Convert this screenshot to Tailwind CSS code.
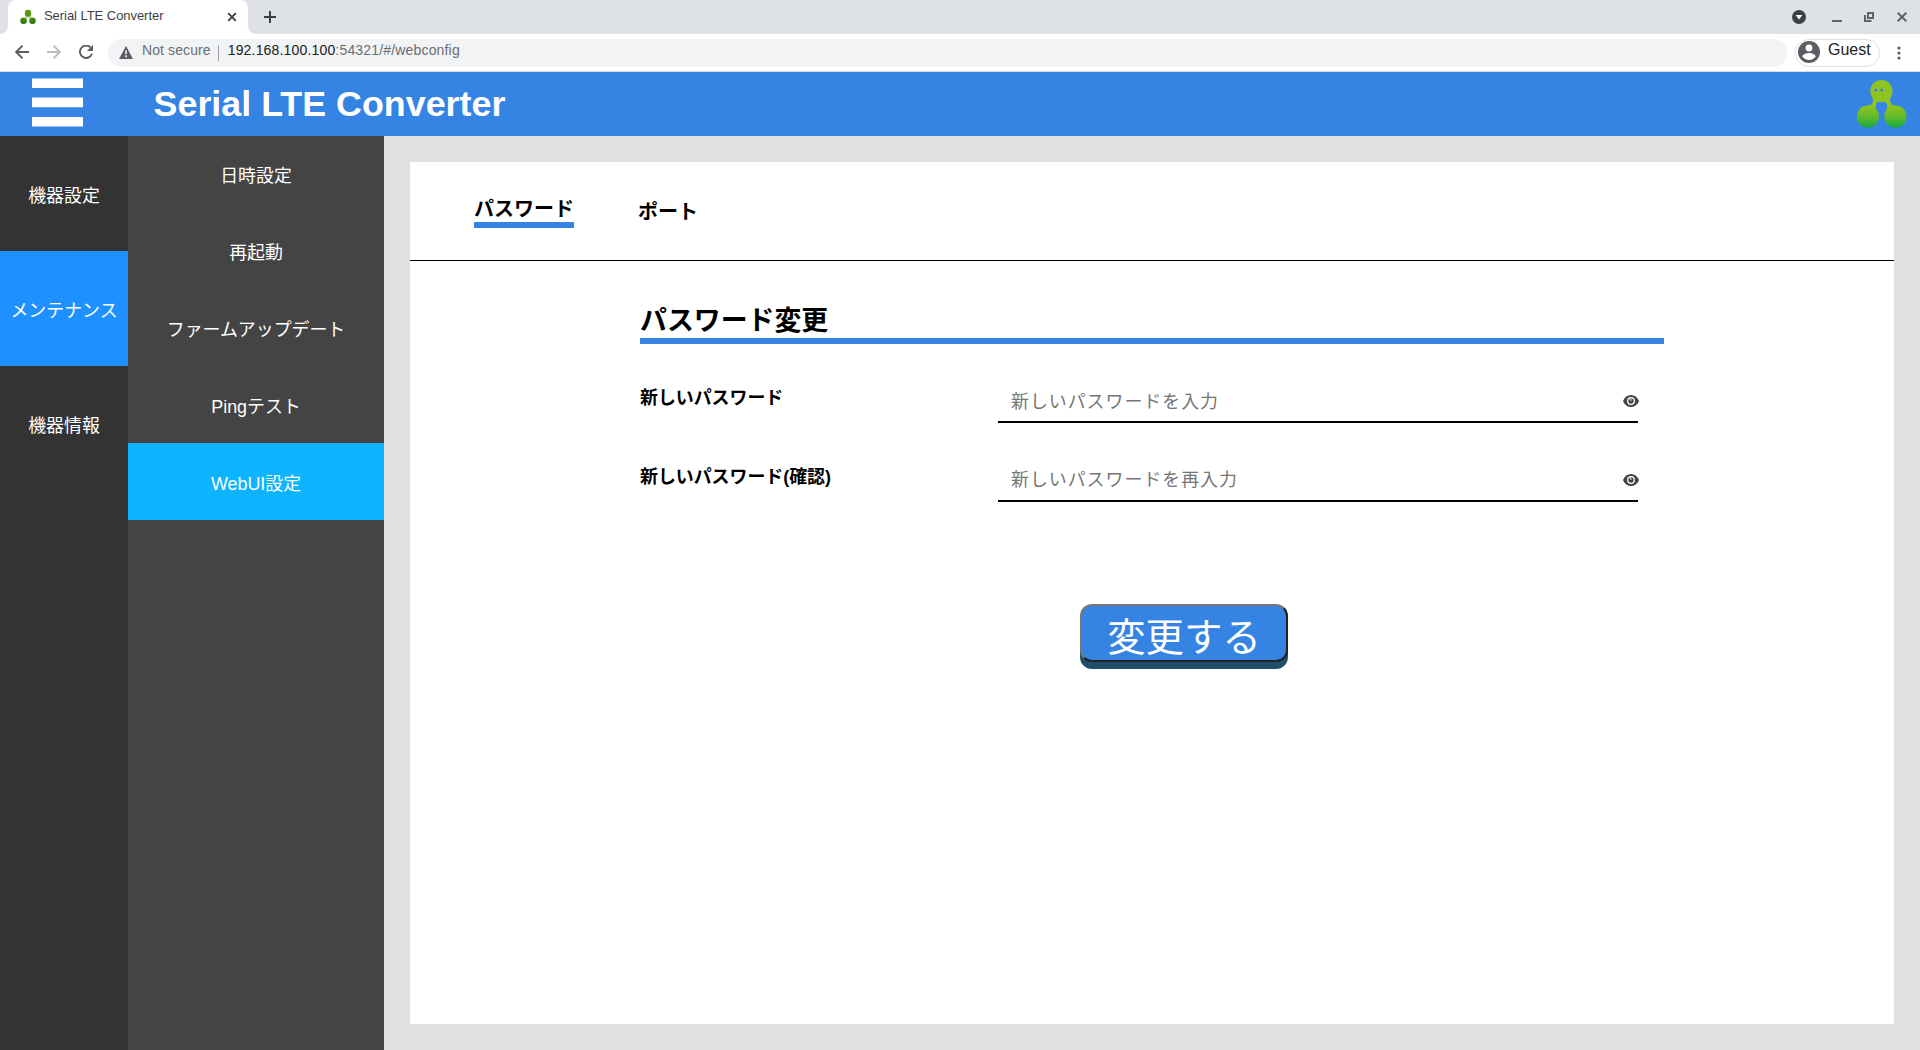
<!DOCTYPE html>
<html lang="ja">
<head>
<meta charset="utf-8">
<title>Serial LTE Converter</title>
<script src="https://cdn.jsdelivr.net/npm/@tailwindcss/browser@4"></script>
</head>
<body class="h-[1050px] w-[1920px] overflow-hidden flex flex-col bg-[#e0e0e0] font-['Liberation_Sans','Noto_Sans_CJK_JP',sans-serif] text-black">
<!-- Tab strip -->
<div class="h-[34px] shrink-0 bg-[#dee1e6] flex items-stretch">
  <div class="relative ml-2 w-[240px] bg-white rounded-t-lg flex items-center pl-3">
    <svg class="absolute -left-2 bottom-0 w-2 h-2" viewBox="0 0 8 8"><path d="M8 0v8H0a8 8 0 0 0 8-8z" fill="#fff"/></svg>
    <svg class="absolute -right-2 bottom-0 w-2 h-2" viewBox="0 0 8 8"><path d="M0 0v8h8a8 8 0 0 1-8-8z" fill="#fff"/></svg>
    <svg class="w-4 h-4 shrink-0" viewBox="0 0 16 16"><defs><linearGradient id="fav" x1="0" y1="0" x2="0" y2="16" gradientUnits="userSpaceOnUse"><stop offset="0" stop-color="#5f9e0c"/><stop offset=".65" stop-color="#438c0a"/><stop offset="1" stop-color="#1c6a0c"/></linearGradient></defs><path d="M5.500 5v4h1.300a1.800 1.800 0 0 1 2.800 0h1.300V5z" fill="#9cc46a"/><g fill="url(#fav)"><circle cx="8" cy="4" r="3.200"/><circle cx="3.600" cy="11.700" r="3.300"/><circle cx="12.500" cy="11.700" r="3.300"/></g></svg>
    <span class="ml-2 -mt-[2px] text-[13px] leading-4 tracking-[-0.05px] text-[#3c4043] whitespace-nowrap">Serial LTE Converter</span>
    <svg class="absolute left-[219px] top-[12px] w-[10px] h-[10px]" viewBox="0 0 10 10"><path d="M1.200 1.200l7.600 7.600M8.800 1.200L1.200 8.800" stroke="#3c4043" stroke-width="1.800"/></svg>
  </div>
  <svg class="ml-4 mt-[11px] w-3 h-3" viewBox="0 0 12 12"><path d="M6 0v12M0 6h12" stroke="#3c4043" stroke-width="2"/></svg>
  <div class="ml-auto flex items-start pr-[13px]">
    <svg class="mt-[10px] w-[14px] h-[14px]" viewBox="0 0 14 14"><circle cx="7" cy="7" r="7" fill="#3c4043"/><path d="M3.700 5h6.600L7 9.500z" fill="#fff"/></svg>
    <svg class="ml-[26px] mt-5 w-[10px] h-[2px]" viewBox="0 0 10 2"><path d="M0 1h10" stroke="#5f6368" stroke-width="2"/></svg>
    <svg class="ml-[22px] mt-3 w-[10px] h-[10px]" viewBox="0 0 10 10"><path d="M4 1h5v5H4zM1 3v6h6.500" fill="none" stroke="#5f6368" stroke-width="2"/></svg>
    <svg class="ml-[23px] mt-3 w-[10px] h-[10px]" viewBox="0 0 10 10"><path d="M.700.700l8.600 8.600M9.300.700L.700 9.300" stroke="#5f6368" stroke-width="2"/></svg>
  </div>
</div>
<!-- Toolbar -->
<div class="h-[38px] shrink-0 bg-white border-b border-[#d9dce0] flex items-center pl-[15px]">
  <svg class="-mt-px w-[14px] h-[14px]" viewBox="0 0 14 14"><path d="M14 7H1.500M7.500.700L1.200 7l6.300 6.300" fill="none" stroke="#5a5e63" stroke-width="1.900"/></svg>
  <svg class="-mt-px ml-[18px] w-[14px] h-[14px]" viewBox="0 0 14 14"><path d="M0 7h12.500M6.500.700L12.800 7l-6.300 6.300" fill="none" stroke="#bcbec1" stroke-width="1.900"/></svg>
  <svg class="-mt-px ml-[18px] w-[14px] h-[14px]" viewBox="0 0 14 14"><path d="M11.600 2.400A6.200 6.200 0 1 0 13 8.800" fill="none" stroke="#5a5e63" stroke-width="1.900"/><path d="M14 0v6H8z" fill="#5a5e63"/></svg>
  <div class="ml-[15px] w-[1679px] h-7 rounded-full bg-[#f1f3f4] flex items-center pl-[11px] text-sm leading-4">
    <svg class="-mt-px w-[14px] h-[13px]" viewBox="0 0 14 13"><path d="M7 0l7 13H0z" fill="#5a5e63"/><path d="M7 4.500v3.500M7 9.200v2" stroke="#fff" stroke-width="1.500"/></svg>
    <span class="ml-[9px] -mt-[6px] tracking-[0.1px] text-[#6a6e73] whitespace-nowrap">Not secure</span>
    <span class="ml-[7px] w-px h-4 bg-[#9aa0a6]"></span>
    <span class="ml-[9px] -mt-[6px] tracking-[0.17px] text-[#6a6e73] whitespace-nowrap"><span class="text-[#202124]">192.168.100.100</span>:54321/#/webconfig</span>
  </div>
  <div class="ml-2 w-[85px] h-7 rounded-full border border-[#dfe1e5] flex items-center pl-[2px]">
    <svg class="-mt-px w-[22px] h-[22px]" viewBox="0 0 22 22"><circle cx="11" cy="11" r="11" fill="#5a5e63"/><circle cx="11" cy="7" r="3.400" fill="#fff"/><path d="M4.300 15.500c0-2.300 4.400-3.500 6.700-3.500s6.700 1.200 6.700 3.500c-1.400 2-3.800 3.400-6.700 3.400s-5.300-1.400-6.700-3.400z" fill="#fff"/></svg>
    <span class="ml-2 -mt-[6px] text-base leading-4 text-[#202124]">Guest</span>
  </div>
  <svg class="ml-[17px] w-[4px] h-[14px]" viewBox="0 0 4 14"><g fill="#5a5e63"><circle cx="2" cy="2" r="1.600"/><circle cx="2" cy="7" r="1.600"/><circle cx="2" cy="12" r="1.600"/></g></svg>
</div>
<!-- App header -->
<header class="h-16 shrink-0 bg-[#3584e4] flex items-center">
  <svg class="ml-8 mb-[4px] w-[51px] h-[50px]" viewBox="0 0 51 50"><path d="M0 1.400h51v9.600H0zM0 20.600h51V30.200H0zM0 39.900h51v9.600H0z" fill="#fff"/></svg>
  <h1 class="ml-[70.600px] text-[35.84px] leading-[41px] font-bold text-white whitespace-nowrap">Serial LTE Converter</h1>
  <svg class="ml-auto mr-[13px] w-[50px] h-[48px]" viewBox="0 0 50 48"><defs><linearGradient id="lg" x1="0" y1="0" x2="0" y2="48" gradientUnits="userSpaceOnUse"><stop offset=".55" stop-color="#8fc31f"/><stop offset=".78" stop-color="#5fb82c"/><stop offset="1" stop-color="#12a93c"/></linearGradient></defs><g fill="url(#lg)"><circle cx="24.400" cy="11.200" r="11.100"/><circle cx="10.900" cy="36.700" r="11.100"/><circle cx="38.400" cy="36.700" r="11.100"/><path d="M14.500 16c3 4 1.500 9.600-3.600 9.600L20 31c-2.500-5-1.200-10.200 4.500-10.200S31.500 26 29 31l9.400-5.400c-5.100 0-6.900-5.600-3.900-9.600z"/></g><circle cx="18.700" cy="10.200" r="1.400" fill="#3584e4"/><circle cx="24.700" cy="10.200" r="1.400" fill="#3584e4"/></svg>
</header>
<div class="flex-1 flex min-h-0">
  <nav class="w-32 bg-[#333] text-white text-[17.92px] text-center">
    <a class="h-[115px] pt-[5px] flex items-center justify-center">機器設定</a>
    <a class="h-[115px] pt-[5px] flex items-center justify-center bg-[#1e90ff]">メンテナンス</a>
    <a class="h-[115px] pt-[5px] flex items-center justify-center">機器情報</a>
  </nav>
  <nav class="w-64 bg-[#444] text-white text-[17.92px] text-center">
    <a class="h-[76.8px] pt-[5px] flex items-center justify-center">日時設定</a>
    <a class="h-[76.8px] pt-[5px] flex items-center justify-center">再起動</a>
    <a class="h-[76.8px] pt-[5px] flex items-center justify-center">ファームアップデート</a>
    <a class="h-[76.8px] pt-[5px] flex items-center justify-center">Pingテスト</a>
    <a class="h-[76.8px] pt-[5px] flex items-center justify-center bg-[#0cb4ff]">WebUI設定</a>
  </nav>
  <main class="flex-1 p-[26px]">
    <section class="h-full bg-white">
      <div class="h-[99px] border-b border-black flex items-start pl-16 gap-16 text-xl font-bold">
        <a class="mt-8 h-[34px] pt-px border-b-6 border-[#3584e4] leading-7">パスワード</a>
        <a class="mt-9 leading-7">ポート</a>
      </div>
      <div class="ml-[230px] w-[1024px]">
        <h2 class="pt-[40px] h-[83px] border-b-6 border-[#3584e4] text-[26.88px] leading-10 font-bold">パスワード変更</h2>
        <div class="h-[79px] flex">
          <label class="w-[358px] pt-10 text-[17.92px] leading-7 font-bold">新しいパスワード</label>
          <div class="relative w-[640px] h-[79px] border-b-2 border-black pt-[44px]">
            <input type="password" placeholder="新しいパスワードを入力" class="w-[600px] h-7 pl-[13px] text-[17.92px] tracking-[1px] outline-none placeholder:text-[#757575]">
            <svg class="absolute right-[-1px] top-[51px] w-4 h-3" viewBox="0 0 16 12"><path d="M0 6C3-2 13-2 16 6c-3 8-13 8-16 0z" fill="#444"/><circle cx="8" cy="6" r="3.300" fill="none" stroke="#fff" stroke-width="1.300"/><path d="M8 6V4H6.300" fill="none" stroke="#fff" stroke-width=".800"/></svg>
          </div>
        </div>
        <div class="h-[79px] flex">
          <label class="w-[358px] pt-10 text-[17.92px] leading-7 font-bold">新しいパスワード(確認)</label>
          <div class="relative w-[640px] h-[79px] border-b-2 border-black pt-[43px]">
            <input type="password" placeholder="新しいパスワードを再入力" class="w-[600px] h-7 pl-[13px] text-[17.92px] tracking-[1px] outline-none placeholder:text-[#757575]">
            <svg class="absolute right-[-1px] top-[51px] w-4 h-3" viewBox="0 0 16 12"><path d="M0 6C3-2 13-2 16 6c-3 8-13 8-16 0z" fill="#444"/><circle cx="8" cy="6" r="3.300" fill="none" stroke="#fff" stroke-width="1.300"/><path d="M8 6V4H6.300" fill="none" stroke="#fff" stroke-width=".800"/></svg>
          </div>
        </div>
        <button class="mt-[102px] ml-[440px] w-[208px] h-[58px] pt-[9px] rounded-xl border-2 border-t-[#767676] border-l-[#767676] border-b-[#212121] border-r-[#212121] bg-[#3584e4] text-white text-[38.4px] leading-[54px] flex justify-center items-center shadow-[0_7px_0_#1f4f6b]">変更する</button>
      </div>
    </section>
  </main>
</div>
</body>
</html>
